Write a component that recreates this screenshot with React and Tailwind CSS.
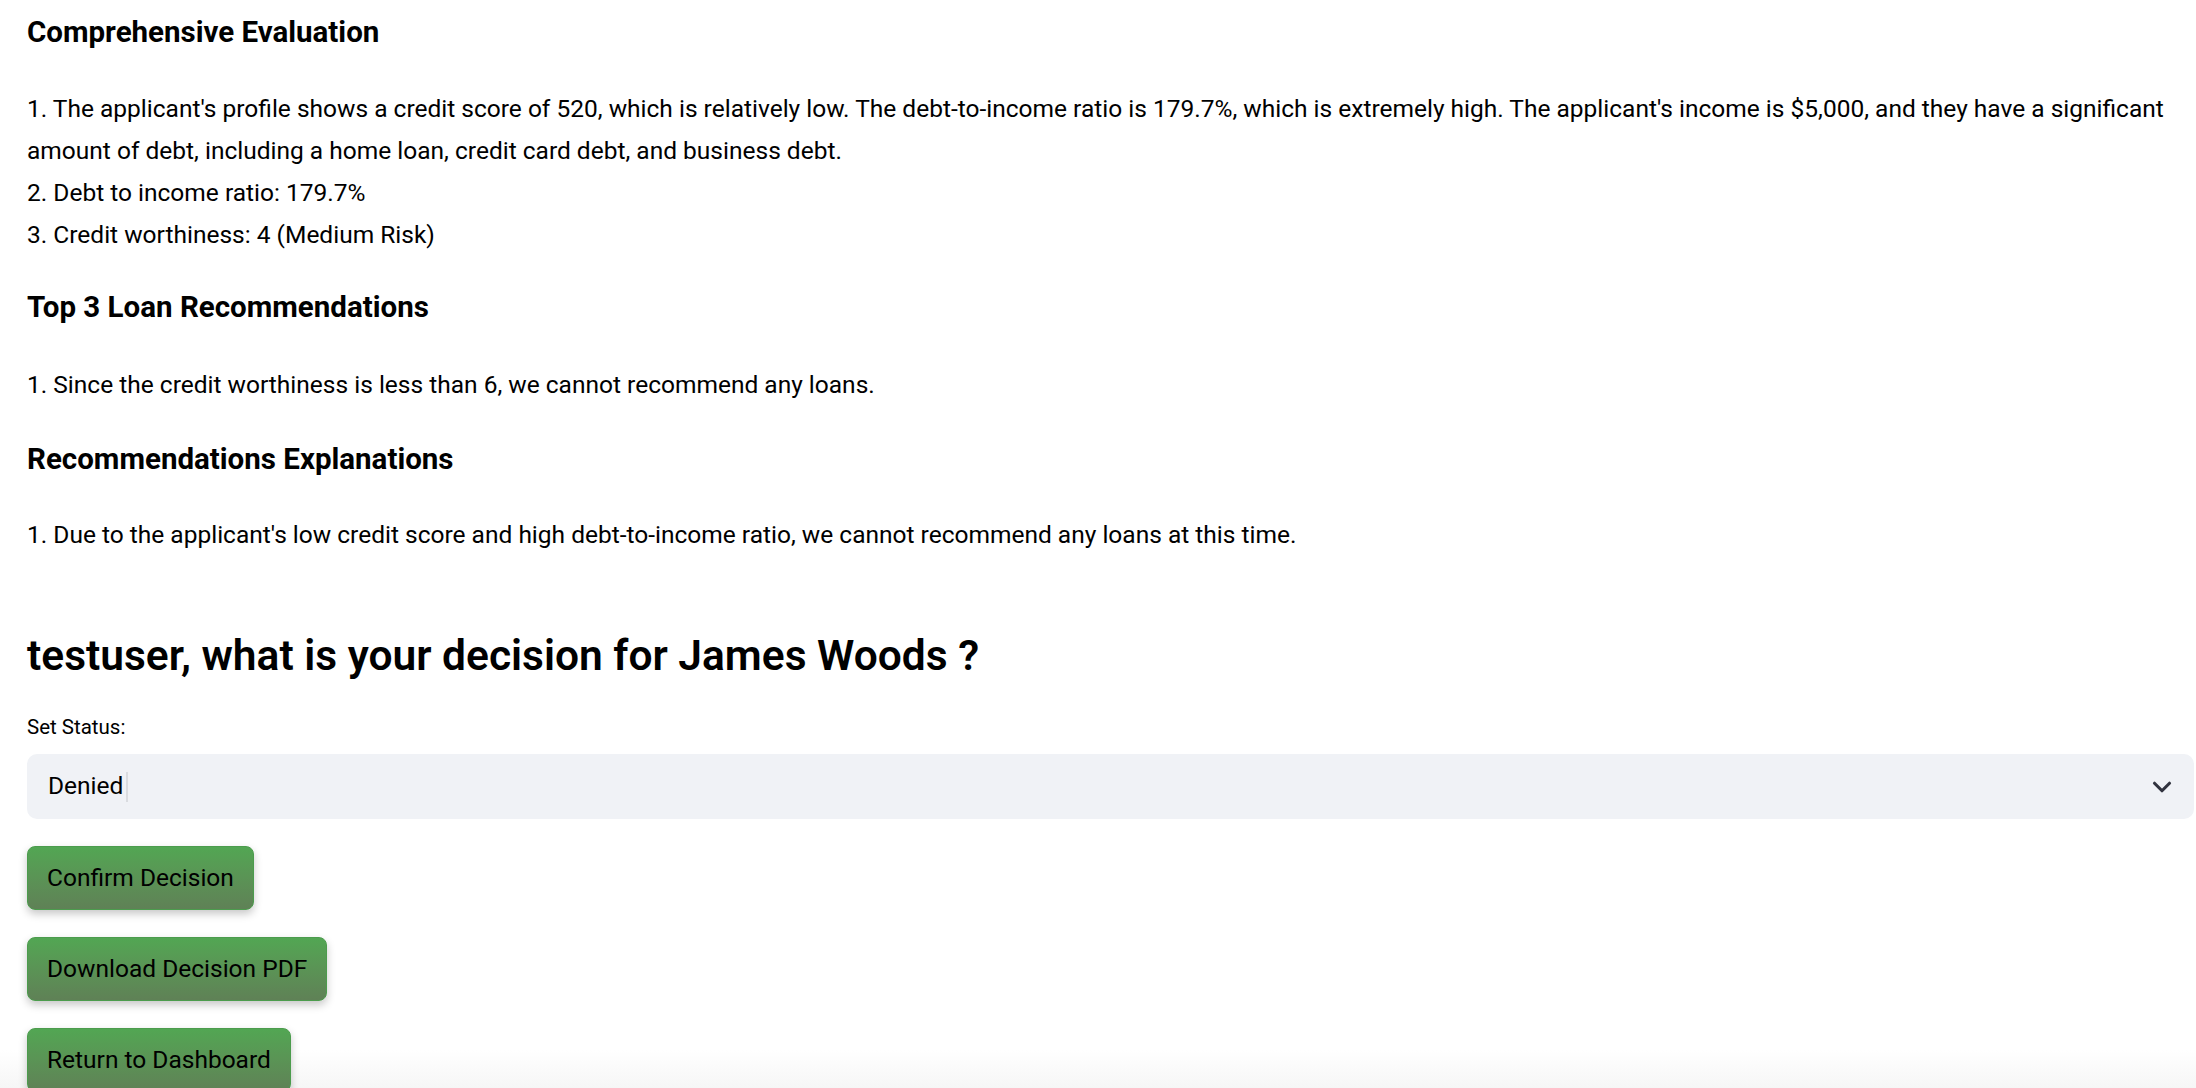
import { ChevronDown } from 'lucide-react';

const font = { fontFamily: 'Roboto, "Noto Sans", sans-serif' };

function DecisionButton({ children }) {
    return (
        <button className="h-[64px] px-[19px] rounded-[8px] border border-[#4c9c4d] bg-gradient-to-b from-[#52a653] to-[#5f8156] text-black text-[24.5px] shadow-[0_4px_8px_rgba(0,0,0,0.22)] leading-none">
            {children}
        </button>
    );
}

export default function App() {
    return (
        <div
            className="min-h-[1088px] pl-[27px] pr-[2px] pt-[14px] text-black bg-[linear-gradient(to_bottom,#ffffff_1050px,#f6f6f6_1088px)]"
            style={font}
        >
            {/* Evaluation */}
            <h4 className="text-[29.5px] font-bold leading-[36px]">Comprehensive Evaluation</h4>
            <p className="mt-[38px] text-[24.5px] leading-[42px]">
                1. The applicant's profile shows a credit score of 520, which is relatively low. The debt-to-income ratio is 179.7%, which is extremely high. The applicant's income is $5,000, and they have a significant
                <br />
                amount of debt, including a home loan, credit card debt, and business debt.
                <br />
                2. Debt to income ratio: 179.7%
                <br />
                3. Credit worthiness: 4 (Medium Risk)
            </p>

            <h4 className="mt-[33px] text-[29.5px] font-bold leading-[36px]">Top 3 Loan Recommendations</h4>
            <p className="mt-[39px] text-[24.5px] leading-[42px]">
                1. Since the credit worthiness is less than 6, we cannot recommend any loans.
            </p>

            <h4 className="mt-[35px] text-[29.5px] font-bold leading-[36px]">Recommendations Explanations</h4>
            <p className="mt-[37px] text-[24.5px] leading-[42px]">
                1. Due to the applicant's low credit score and high debt-to-income ratio, we cannot recommend any loans at this time.
            </p>

            {/* Decision */}
            <h3 className="mt-[74px] text-[42.5px] font-semibold leading-[52px]">testuser, what is your decision for James Woods ?</h3>
            <label className="block mt-[31px] text-[20.5px] leading-[28px]">Set Status:</label>
            <div className="mt-[13px] h-[65px] rounded-[10px] bg-[#f0f2f6] flex items-center pl-[21px] pr-[17px]">
                <span className="text-[24.5px]">Denied</span>
                <span className="ml-[3px] w-[2px] h-[30px] bg-[#dadce0]" />
                <ChevronDown size={30} strokeWidth={2.5} className="ml-auto text-[#31333f]" />
            </div>

            <div className="mt-[27px] flex flex-col items-start gap-[27px]">
                <DecisionButton>Confirm Decision</DecisionButton>
                <DecisionButton>Download Decision PDF</DecisionButton>
                <DecisionButton>Return to Dashboard</DecisionButton>
            </div>
        </div>
    );
}
